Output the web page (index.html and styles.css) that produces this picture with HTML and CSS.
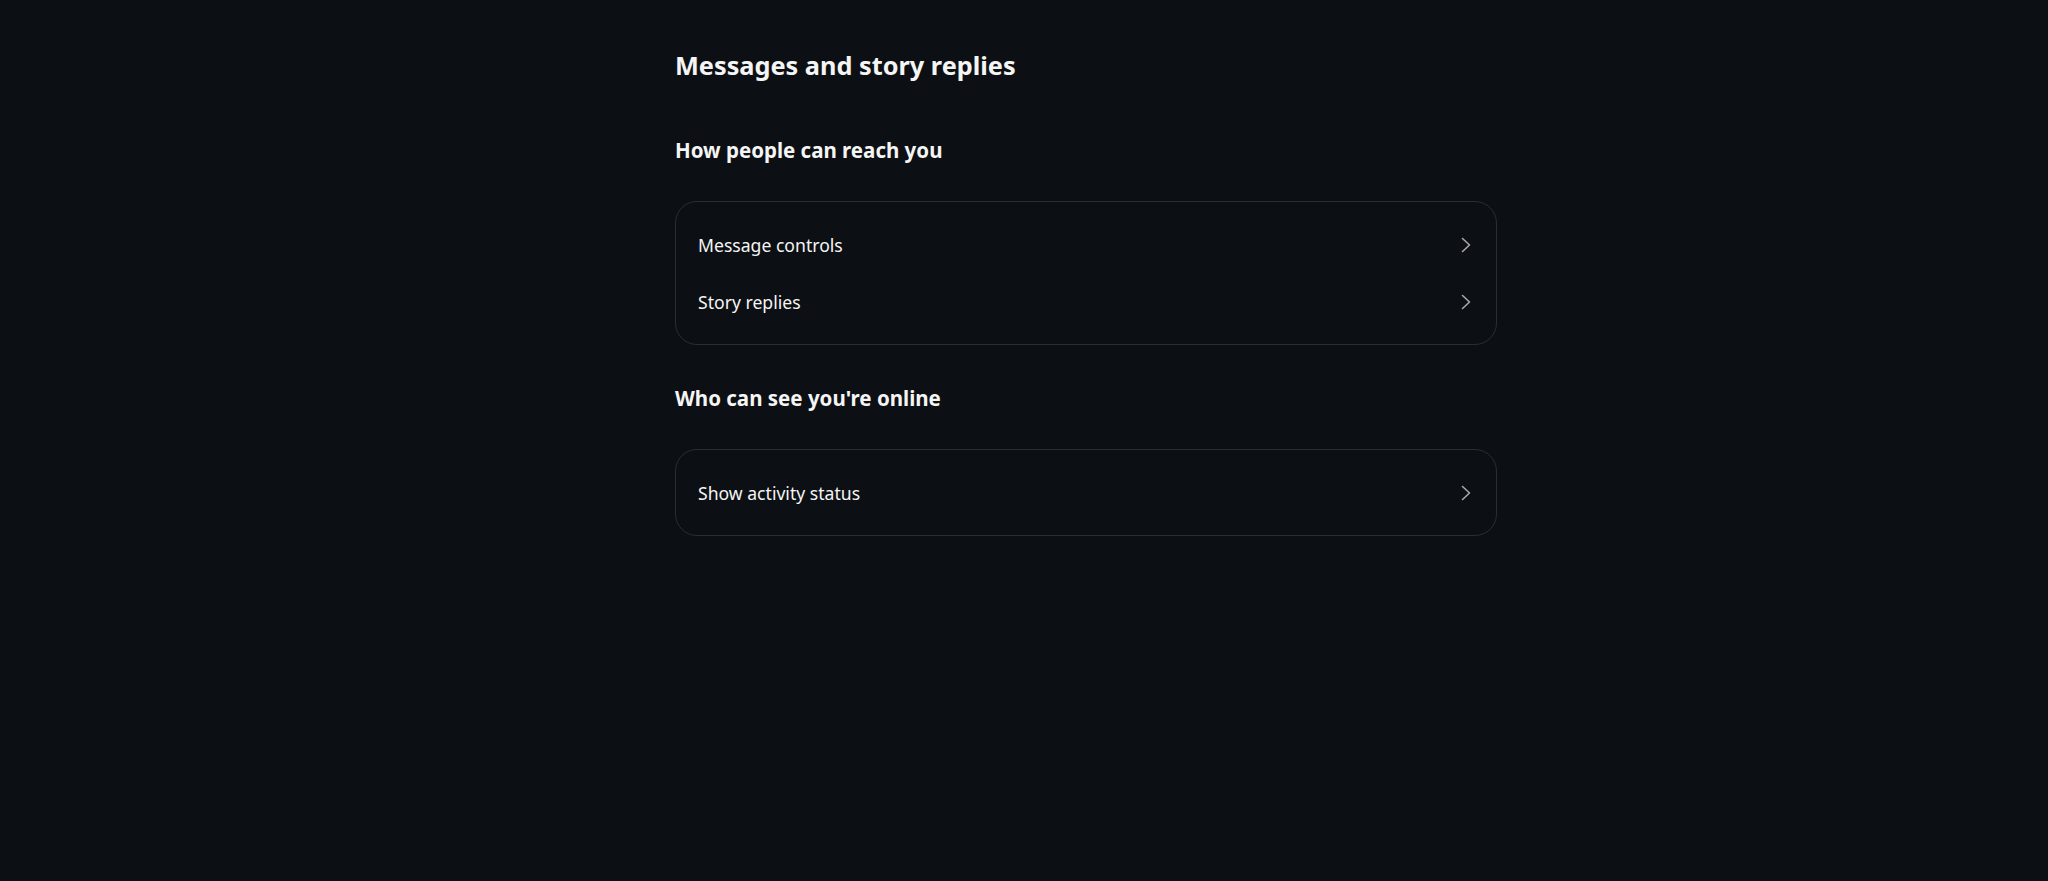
FILE: index.html
```html
<!DOCTYPE html>
<html lang="en">
<head>
<meta charset="utf-8">
<title>Messages and story replies</title>
<link rel="stylesheet" href="styles.css">
</head>
<body>
<main class="page">
  <section class="content">
    <h1 class="title">Messages and story replies</h1>
    <h2 class="section-title">How people can reach you</h2>
    <div class="card">
      <a class="row" href="#"><span class="label">Message controls</span>
        <svg class="chev" viewBox="0 0 10 16" width="10" height="16"><polyline points="1.5,1.5 8.5,8 1.5,14.5" fill="none" stroke="currentColor" stroke-width="1.6" stroke-linecap="round" stroke-linejoin="round"/></svg></a>
      <a class="row" href="#"><span class="label">Story replies</span>
        <svg class="chev" viewBox="0 0 10 16" width="10" height="16"><polyline points="1.5,1.5 8.5,8 1.5,14.5" fill="none" stroke="currentColor" stroke-width="1.6" stroke-linecap="round" stroke-linejoin="round"/></svg></a>
    </div>
    <h2 class="section-title">Who can see you're online</h2>
    <div class="card">
      <a class="row" href="#"><span class="label">Show activity status</span>
        <svg class="chev" viewBox="0 0 10 16" width="10" height="16"><polyline points="1.5,1.5 8.5,8 1.5,14.5" fill="none" stroke="currentColor" stroke-width="1.6" stroke-linecap="round" stroke-linejoin="round"/></svg></a>
    </div>
  </section>
</main>
</body>
</html>
```
FILE: styles.css
```css
html, body {
  margin: 0;
  padding: 0;
  background: #0c1014;
  height: 100%;
}
body {
  font-family: "Noto Sans", "Open Sans", sans-serif;
  color: #f5f5f5;
}
.page {
  display: flex;
  padding-left: 675px;
  padding-top: 49px;
}
.content {
  width: 822px;
  display: flex;
  flex-direction: column;
}
.title {
  margin: 0 0 56px;
  font-size: 25.3px;
  line-height: 32px;
  font-weight: 700;
}
.section-title {
  margin: 0 0 38px;
  font-size: 20.5px;
  line-height: 26px;
  font-weight: 700;
}
.card {
  border: 1px solid #2a2e33;
  border-radius: 22px;
  padding: 14px 0;
  margin-bottom: 40px;
  display: flex;
  flex-direction: column;
}
.row {
  display: flex;
  align-items: center;
  justify-content: space-between;
  height: 57px;
  padding: 0 25px 0 22px;
  color: #f5f5f5;
  text-decoration: none;
}
.label {
  font-size: 17.6px;
  line-height: 22px;
}
.chev {
  color: #a8a8a8;
  display: block;
}
```
